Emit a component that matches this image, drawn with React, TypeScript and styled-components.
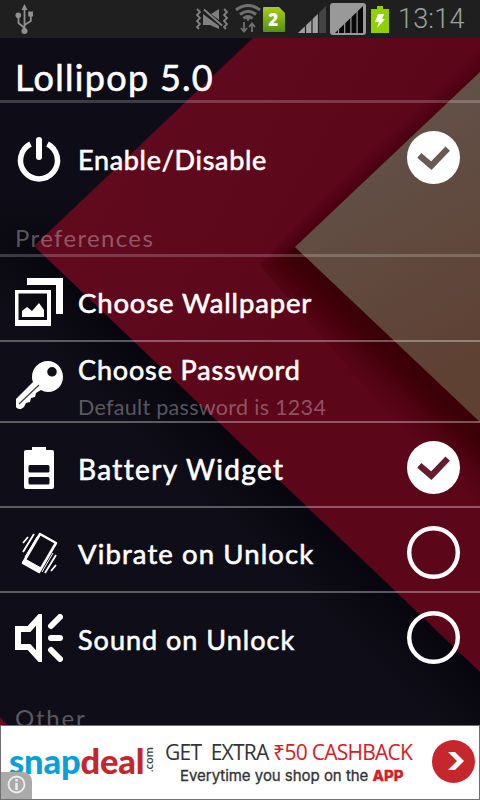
import React from "react";
import styled, { createGlobalStyle } from "styled-components";

const GlobalStyle = createGlobalStyle`
  * { box-sizing: border-box; }
  body { margin: 0; background: #0d0b15; }
`;

const Screen = styled.div`
  position: relative;
  width: 480px;
  height: 800px;
  overflow: hidden;
  display: flex;
  flex-direction: column;
  font-family: Lato, sans-serif;
  color: #fff;
`;

const WallpaperArt = styled.svg`
  position: absolute;
  inset: 0;
  z-index: -1;
`;

const StatusBar = styled.header`
  height: 38px;
  flex: none;
  display: flex;
  align-items: center;
  background: #1f1f1f;
  padding: 0 15px;
`;

const StatusIcon = styled.svg<{ $gap?: number }>`
  flex: none;
  display: block;
  margin-left: ${(p) => p.$gap ?? 0}px;
`;

const Spacer = styled.div`
  flex: 1;
`;

const Clock = styled.time`
  width: 67px;
  margin-left: 9px;
  font: 300 27px/38px Roboto, sans-serif;
  letter-spacing: 0.2px;
  color: #a0a0a0;
  white-space: nowrap;
`;

const Text = styled.span<{ $size: number; $spacing: number; $dim?: boolean }>`
  display: block;
  white-space: nowrap;
  font-size: ${(p) => p.$size}px;
  line-height: 32px;
  letter-spacing: ${(p) => p.$spacing}px;
  color: ${(p) => (p.$dim ? "rgba(255,255,255,0.33)" : "#fff")};
  -webkit-text-stroke: ${(p) => (p.$dim ? "0" : "0.6px #fff")};
  stroke-linejoin: round;
`;

const TitleBar = styled.div`
  height: 65px;
  flex: none;
  padding: 23px 15px 0;
  border-bottom: 3px solid rgba(255, 255, 255, 0.2);
`;

const SectionHeader = styled.div<{ $height: number; $top?: number; $plain?: boolean }>`
  height: ${(p) => p.$height}px;
  flex: none;
  overflow: hidden;
  padding: ${(p) => p.$top ?? 10}px 15px 0;
  border-bottom: ${(p) => (p.$plain ? "0" : "3px solid rgba(255, 255, 255, 0.2)")};
`;

/* $shift nudges the row contents below the row's centre line */
const Row = styled.div<{ $height: number; $shift: number; $last?: boolean }>`
  height: ${(p) => p.$height}px;
  flex: none;
  display: flex;
  align-items: center;
  padding: ${(p) => p.$shift * 2}px 20px 0 15px;
  border-bottom: ${(p) => (p.$last ? "0" : "2px solid rgba(255, 255, 255, 0.33)")};
`;

const RowIcon = styled.svg`
  flex: none;
  width: 48px;
  height: 48px;
  display: block;
  margin-top: 1px;
`;

const RowText = styled.div<{ $top?: number }>`
  flex: 1;
  padding: ${(p) => p.$top ?? 3}px 0 0 15px;
`;

const Summary = styled.div`
  margin-top: 5px;
`;

const CheckIcon = styled.svg`
  flex: none;
  width: 53px;
  height: 53px;
  display: block;
`;

const AdBanner = styled.aside`
  position: relative;
  height: 75px;
  flex: none;
  display: flex;
  border: 1px solid #707070;
  background: #fff;
`;

const Logo = styled.div`
  width: 157px;
  flex: none;
  padding: 14px 0 0 8px;
  display: flex;
  align-items: flex-start;
  font: 900 34.5px/42px Lato, sans-serif;
  letter-spacing: -0.2px;
  color: #0a9fd6;
`;

const LogoRed = styled.span`
  color: #c1272d;
`;

const LogoSuffix = styled.span`
  writing-mode: vertical-rl;
  transform: rotate(180deg);
  font: 600 11px/10px "Open Sans", sans-serif;
  letter-spacing: -0.1px;
  color: #444;
  margin: 7px 0 0 0;
`;

const AdCopy = styled.div`
  flex: 1;
  padding-left: 7px;
  white-space: nowrap;
  color: #333;
`;

const AdLine = styled.div`
  font: 400 21px/28px "Open Sans", sans-serif;
  letter-spacing: -0.75px;
  margin-top: 12px;
`;

const AdSubLine = styled.div`
  padding-left: 15px;
  font: 400 15px/20px Inter, sans-serif;
  letter-spacing: -0.03px;
  -webkit-text-stroke: 0.3px currentColor;
`;

const AdRed = styled.span<{ $bold?: boolean }>`
  color: #d32027;
  font-weight: ${(p) => (p.$bold ? 800 : 400)};
`;

const AdArrow = styled.svg`
  flex: none;
  width: 43px;
  height: 43px;
  margin: 14px 4px 0 0;
`;

const InfoBadge = styled.svg`
  position: absolute;
  left: 0;
  bottom: 0;
`;

function CheckedMark({ color }: { color: string }) {
  return (
    <CheckIcon viewBox="0 0 53 53">
      <circle cx="26.5" cy="26.5" r="26.5" fill="#fff" />
      <path d="M12.300 24.300L24.300 34.700L40.700 17.700" fill="none" stroke={color} strokeWidth="6.2" />
    </CheckIcon>
  );
}

function EmptyMark() {
  return (
    <CheckIcon viewBox="0 0 53 53">
      <circle cx="26.5" cy="26.5" r="24.3" fill="none" stroke="#fff" strokeWidth="4.4" />
    </CheckIcon>
  );
}

const signalGaps = [8.5, 14.7, 20.9, 27.1];

export default function App() {
  return (
    <Screen>
      <GlobalStyle />
      <WallpaperArt width="480" height="800" viewBox="0 0 480 800">
        <defs>
          <linearGradient id="lower" gradientUnits="userSpaceOnUse" x1="394" y1="342" x2="347" y2="391">
            <stop offset="0" stopColor="#380006" />
            <stop offset="0.3" stopColor="#430009" />
            <stop offset="1" stopColor="#5a061a" stopOpacity="0" />
          </linearGradient>
          <linearGradient id="upper" gradientUnits="userSpaceOnUse" x1="367" y1="179" x2="354" y2="165">
            <stop offset="0" stopColor="#490010" />
            <stop offset="1" stopColor="#4b0012" stopOpacity="0" />
          </linearGradient>
          <linearGradient id="tan" x1="0" y1="0" x2="0.3" y2="1">
            <stop offset="0" stopColor="#60584f" />
            <stop offset="0.4" stopColor="#624e45" />
            <stop offset="1" stopColor="#5e4133" />
          </linearGradient>
          <linearGradient id="navy" gradientUnits="userSpaceOnUse" x1="260" y1="463" x2="215" y2="510">
            <stop offset="0" stopColor="#07060e" />
            <stop offset="1" stopColor="#0f0d17" />
          </linearGradient>
          <linearGradient id="navyTop" gradientUnits="userSpaceOnUse" x1="0" y1="200" x2="0" y2="270">
            <stop offset="0" stopColor="#0e0c16" />
            <stop offset="1" stopColor="#0e0c16" stopOpacity="0" />
          </linearGradient>
          <linearGradient id="red" x1="0" y1="0" x2="0.6" y2="0.5">
            <stop offset="0" stopColor="#630c20" />
            <stop offset="1" stopColor="#5c0619" />
          </linearGradient>
        </defs>
        <rect width="480" height="800" fill="url(#navy)" />
        <rect y="38" width="253" height="232" fill="url(#navyTop)" />
        <path d="M253 38H480V672L34 246Z" fill="url(#red)" />
        <path d="M480 38V72L295 247L262 268L260 264L478 38Z" fill="url(#upper)" />
        <path d="M295 247L480 422V520L262 268Z" fill="url(#lower)" />
        <path d="M480 72L295 247L480 422Z" fill="url(#tan)" />
        <path d="M0 717L8 726H0Z" fill="#630c20" />
      </WallpaperArt>

      <StatusBar>
        <StatusIcon width="20" height="32" viewBox="0 0 20 32" fill="none" stroke="#909090" strokeWidth="1.8">
          <path d="M9.500 28V5M9.500 25L3.500 20V13M9.500 22L15.800 18V10" />
          <path d="M9.500 1L6.500 7H12.500Z" fill="#909090" stroke="none" />
          <circle cx="3.3" cy="12.2" r="2.8" fill="#909090" stroke="none" />
          <rect x="13.2" y="8.5" width="4.8" height="5" fill="#909090" stroke="none" />
          <circle cx="9.5" cy="28" r="3" fill="#909090" stroke="none" />
        </StatusIcon>
        <Spacer />
        <StatusIcon width="33" height="22" viewBox="0 0 33 22" fill="none" stroke="#808080" strokeWidth="1.8">
          <path d="M1 1L4 4L1 7L4 10L1 13L4 16L1 19L3 21M28 1L31 4L28 7L31 10L28 13L31 16L28 19L30 21" />
          <path d="M7 6L23 18V21L14 17H7ZM15 6L23 1V12Z" fill="#808080" stroke="none" />
          <path d="M8 1.500L26 17.500" strokeWidth="2" />
        </StatusIcon>
        <StatusIcon $gap={6} width="26" height="30" viewBox="0 0 26 30" fill="none" stroke="#707070" strokeWidth="3">
          <path d="M1 6Q13 -3 25 6M5 10.500Q13 4 21 10.500M8.500 14.500Q13 10.500 17.500 14.500" />
          <path d="M10.500 14H15.500L13 17.500Z" fill="#707070" stroke="none" />
          <path d="M9 18V27M6 24L9 27.500L12 24M17 28V20M14 23L17 19.500L20 23" strokeWidth="1.8" />
        </StatusIcon>
        <StatusIcon $gap={2} width="22" height="25" viewBox="0 0 22 25">
          <defs>
            <linearGradient id="sim" x1="0" y1="0" x2="0" y2="1">
              <stop stopColor="#a9cb20" />
              <stop offset="1" stopColor="#53920d" />
            </linearGradient>
          </defs>
          <path d="M1 0H16L22 6V24Q22 25 21 25H1Q0 25 0 24V1Q0 0 1 0Z" fill="url(#sim)" />
          <text x="10.3" y="18.5" textAnchor="middle" fontFamily="Open Sans, sans-serif" fontSize="17" fontWeight="800" fill="#fff">2</text>
        </StatusIcon>
        <StatusIcon $gap={13} width="28" height="27" viewBox="0 0 28 27">
          <path d="M0 27L28 0V27Z" fill="#444" />
          <path d="M0 27L21 7V27Z" fill="#a0a0a0" />
          <path d="M7.500 18V27M14 10V27M20.500 4V27" stroke="#1f1f1f" strokeWidth="1.2" />
        </StatusIcon>
        <StatusIcon $gap={4} width="36" height="32" viewBox="0 0 36 32">
          <rect width="36" height="32" rx="3" fill="#999" />
          <path d="M5 30L33 3V30Z" fill="#080808" />
          {signalGaps.map((x) => (
            <path key={x} d={`M${x} 6V30`} stroke="#999" strokeWidth="1.2" />
          ))}
        </StatusIcon>
        <StatusIcon $gap={5} width="18" height="27" viewBox="0 0 18 27">
          <path d="M6 0H12V3H18V27H0V3H6Z" fill="#8fd000" />
          <path d="M7 8H13L11 13H14L6 22L8 16H4Z" fill="#fff" />
        </StatusIcon>
        <Clock>13:14</Clock>
      </StatusBar>

      <TitleBar>
        <Text $size={36} $spacing={1.3}>Lollipop 5.0</Text>
      </TitleBar>

      <Row $height={109} $shift={0} $last>
        <RowIcon viewBox="0 0 48 48" fill="none" stroke="#fff" strokeLinecap="round">
          <path d="M15.500 10A18.500 18.500 0 1 0 32.500 10" strokeWidth="5.5" strokeLinecap="butt" />
          <path d="M24 6V23" strokeWidth="6" />
        </RowIcon>
        <RowText $top={4}><Text $size={27} $spacing={0.7}>Enable/Disable</Text></RowText>
        <CheckedMark color="#6a5a53" />
      </Row>

      <SectionHeader $height={45}>
        <Text $size={24} $spacing={1.35} $dim>Preferences</Text>
      </SectionHeader>

      <Row $height={85} $shift={3}>
        <RowIcon viewBox="0 0 48 48">
          <path d="M12 0H48V36H41V7H12Z" fill="#fff" />
          <path d="M0 12H36V48H0ZM3.500 15.500V42H32V15.500Z" fill="#fff" fillRule="evenodd" />
          <path d="M7 39V33L12 29L17 33L24 25L29 32V39Z" fill="#fff" />
        </RowIcon>
        <RowText><Text $size={27.5} $spacing={0.85}>Choose Wallpaper</Text></RowText>
      </Row>

      <Row $height={81} $shift={3}>
        <RowIcon viewBox="0 0 48 48">
          <path
            d="M33 0C24 0 17 7 17 16Q17 19 18 21L1 38V46Q2 48 6 48L9 46L11 42L15 41L16 37L20 36L21 32L26 29Q29 31 33 31C42 31 48 24 48 16S42 0 33 0ZM37 6A4.800 4.800 0 1 1 37 15.600A4.800 4.800 0 1 1 37 6Z"
            fill="#fff"
            fillRule="evenodd"
          />
          <path d="M4 43L24 24" stroke="#444" strokeWidth="1.3" />
        </RowIcon>
        <RowText $top={7}>
          <Text $size={27} $spacing={0.85}>Choose Password</Text>
          <Summary><Text $size={21.5} $spacing={0.3} $dim>Default password is 1234</Text></Summary>
        </RowText>
      </Row>

      <Row $height={85} $shift={3}>
        <RowIcon viewBox="0 0 48 48">
          <path
            d="M17 3H31V6H37Q39 6 39 8V43Q39 45 37 45H11Q9 45 9 43V8Q9 6 11 6H17ZM15 21Q13.500 21 13.500 22.500V27Q13.500 28.500 15 28.500H33Q34.500 28.500 34.500 27V22.500Q34.500 21 33 21ZM15 33Q13.500 33 13.500 34.500V39Q13.500 40.500 15 40.500H33Q34.500 40.500 34.500 39V34.500Q34.500 33 33 33Z"
            fill="#fff"
            fillRule="evenodd"
          />
        </RowIcon>
        <RowText><Text $size={28} $spacing={1.35}>Battery Widget</Text></RowText>
        <CheckedMark color="#671b2e" />
      </Row>

      <Row $height={85} $shift={3}>
        <RowIcon viewBox="0 0 48 48" fill="none" stroke="#fff">
          <path d="M25 5L41 14L24 43L8 34Z" strokeWidth="2.5" strokeLinejoin="round" />
          <path d="M8 33L24 42L26 39L10 30Z" fill="#fff" />
          <path d="M19 5L8 23M13 8L8 14M41 26L30 44M41 36L36 42" strokeWidth="1.8" />
          <path d="M22 8L10 28M38 24L27 43" strokeWidth="1" />
        </RowIcon>
        <RowText><Text $size={27.5} $spacing={1.1}>Vibrate on Unlock</Text></RowText>
        <EmptyMark />
      </Row>

      <Row $height={85} $shift={2} $last>
        <RowIcon viewBox="0 0 48 48" fill="none" stroke="#fff">
          <path d="M3 15H14L24 4V44L14 33H3Z" strokeWidth="6" />
          <path d="M36 12L45 3M36 24H45M36 36L45 45" strokeWidth="6" strokeLinecap="round" />
        </RowIcon>
        <RowText $top={4}><Text $size={27} $spacing={1}>Sound on Unlock</Text></RowText>
        <EmptyMark />
      </Row>

      <SectionHeader $height={47} $top={24} $plain>
        <Text $size={24} $spacing={1.8} $dim>Other</Text>
      </SectionHeader>

      <AdBanner>
        <Logo>
          <span>snap</span><LogoRed>deal</LogoRed><LogoSuffix>.com</LogoSuffix>
        </Logo>
        <AdCopy>
          <AdLine>GET&nbsp; EXTRA <AdRed>₹50 CASHBACK</AdRed></AdLine>
          <AdSubLine>Everytime you shop on the <AdRed $bold>APP</AdRed></AdSubLine>
        </AdCopy>
        <AdArrow viewBox="0 0 43 43">
          <circle cx="21.5" cy="21.5" r="21.5" fill="#c4282d" />
          <path d="M16 12H23L32 21L23 30H16L25 21Z" fill="#fff" />
        </AdArrow>
        <InfoBadge width="31" height="27" viewBox="0 0 31 27">
          <path d="M0 0H22Q31 1 31 10V27H0Z" fill="#aaa" />
          <circle cx="15.5" cy="12.5" r="8" fill="none" stroke="#eee" strokeWidth="1.8" />
          <path d="M15.500 11V18M15.500 7V9.500" stroke="#eee" strokeWidth="2.5" />
        </InfoBadge>
      </AdBanner>
    </Screen>
  );
}
